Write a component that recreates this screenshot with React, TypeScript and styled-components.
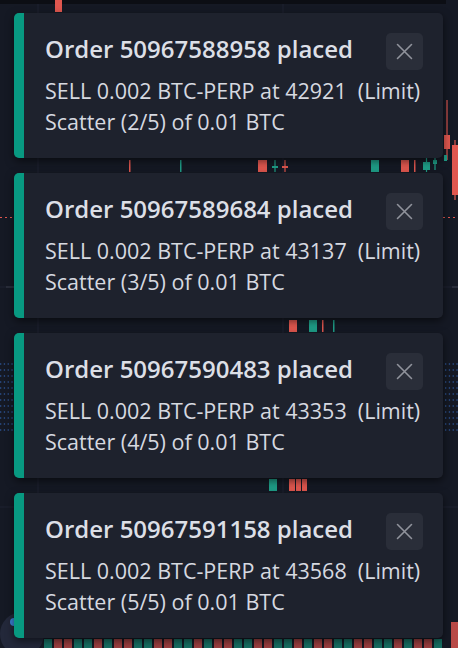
import React from "react";
import styled, { createGlobalStyle } from "styled-components";

const GlobalStyle = createGlobalStyle`
  html, body {
    margin: 0;
    padding: 0;
    background: #131722;
    overflow: hidden;
  }
  * { box-sizing: border-box; }
`;

const Screen = styled.div`
  position: relative;
  width: 458px;
  height: 648px;
  overflow: hidden;
  background: #151924;
  font-family: "Open Sans", "DejaVu Sans", sans-serif;
`;

const ChartLayer = styled.svg`
  position: absolute;
  inset: 0;
  display: block;
`;

const ToastStack = styled.div`
  position: absolute;
  top: 13px;
  left: 14px;
  width: 429px;
  display: flex;
  flex-direction: column;
  gap: 15px;
`;

const Toast = styled.div`
  display: flex;
  height: 145px;
  background: #1e222d;
  border-radius: 5px;
  overflow: hidden;
  box-shadow: 0 3px 8px rgba(0, 0, 0, 0.55);
`;

const Stripe = styled.div<{ $color: string }>`
  flex: 0 0 10px;
  background: ${(p) => p.$color};
`;

const Content = styled.div`
  flex: 1;
  display: flex;
  flex-direction: column;
  padding: 22px 20px 0 21px;
  color: #d8dbe2;
`;

const Header = styled.div`
  display: flex;
  justify-content: space-between;
  align-items: flex-start;
  height: 28px;
  margin-bottom: 12px;
`;

const Title = styled.div`
  font-size: 24px;
  line-height: 28px;
  font-weight: 600;
  white-space: nowrap;
  color: #dcdfe6;
`;

const CloseButton = styled.button`
  flex: 0 0 37px;
  width: 37px;
  height: 37px;
  margin-top: -2px;
  padding: 0;
  border: none;
  border-radius: 5px;
  background: #2a2e39;
  display: flex;
  align-items: center;
  justify-content: center;
  cursor: pointer;
`;

const Line = styled.div`
  font-size: 21.5px;
  line-height: 31px;
  white-space: pre;
  color: #d6d9e0;
`;

type Order = { id: string; price: string; step: number };

const orders: Order[] = [
  { id: "50967588958", price: "42921", step: 2 },
  { id: "50967589684", price: "43137", step: 3 },
  { id: "50967590483", price: "43353", step: 4 },
  { id: "50967591158", price: "43568", step: 5 },
];

const CloseIcon = () => (
  <svg width="17" height="17" viewBox="0 0 17 17">
    <path d="M1.5 1.5 L15.5 15.5 M15.5 1.5 L1.5 15.5" stroke="#90939c" strokeWidth="1.6" strokeLinecap="round" />
  </svg>
);

const RED = "#e0574f";
const GREEN = "#1f9e88";

type Candle = { x: number; y: number; w: number; h: number; c: string; wick?: [number, number] };

const candles: Candle[] = [
  { x: 55, y: 0, w: 7, h: 12, c: RED },
  { x: 129, y: 160, w: 1.5, h: 12, c: RED },
  { x: 180, y: 160, w: 1.5, h: 12, c: GREEN },
  { x: 258, y: 160, w: 9, h: 12, c: RED },
  { x: 272, y: 166, w: 6, h: 2, c: GREEN, wick: [160, 172] },
  { x: 282, y: 166, w: 6, h: 2, c: RED, wick: [160, 172] },
  { x: 371, y: 160, w: 8, h: 12, c: GREEN },
  { x: 401, y: 160, w: 8, h: 12, c: RED },
  { x: 414, y: 160, w: 1.5, h: 12, c: RED },
  { x: 423, y: 162, w: 7, h: 8, c: GREEN, wick: [158, 172] },
  { x: 433, y: 160, w: 4, h: 4, c: GREEN, wick: [158, 170] },
  { x: 289, y: 320, w: 8, h: 12, c: RED },
  { x: 309, y: 320, w: 8, h: 12, c: GREEN },
  { x: 322, y: 320, w: 1.5, h: 12, c: RED },
  { x: 333, y: 320, w: 1.5, h: 12, c: GREEN },
  { x: 269, y: 479, w: 8, h: 12, c: GREEN },
  { x: 289, y: 479, w: 6, h: 12, c: RED },
  { x: 296, y: 479, w: 5, h: 12, c: RED },
  { x: 302, y: 479, w: 5, h: 12, c: RED },
  { x: 444, y: 135, w: 6, h: 14, c: RED, wick: [100, 160] },
  { x: 452, y: 145, w: 6, h: 50, c: RED, wick: [140, 200] },
  { x: 444, y: 155, w: 3, h: 6, c: GREEN },
  { x: 451, y: 622, w: 7, h: 26, c: "#b84a47" },
];

const volume = Array.from({ length: 40 }, (_, i) => ({
  x: 44 + i * 10,
  c: [1, 0, 0, 1, 1, 0, 1, 0, 0, 1][i % 10] ? "#176f63" : "#9c3f40",
}));

const ChartBackground = () => (
  <ChartLayer width="458" height="648" viewBox="0 0 458 648">
    <rect width="458" height="648" fill="#151924" />
    <path d="M38 0 V648 M283 0 V648" stroke="#1e2230" strokeWidth="1" />
    <path d="M0 287 H458 M0 507 H458" stroke="#1e2230" strokeWidth="1" />
    <path d="M6 287 H14 M452 287 H458" stroke="#3a3e4a" strokeWidth="1" />
    <rect x="0" y="0" width="446" height="4" fill="#0c0e14" />
    <path d="M0 217.5 H14 M443 217.5 H458" stroke={RED} strokeWidth="1" strokeDasharray="2 3" />
    {Array.from({ length: 12 }, (_, r) => (
      <path
        key={r}
        d={`M0 ${364 + r * 6} H14 M445 ${364 + r * 6} H458`}
        stroke="#2b4f8a"
        strokeWidth="1.3"
        strokeDasharray="1.3 2.5"
      />
    ))}
    {candles.map((c, i) => (
      <g key={i}>
        {c.wick && (
          <line x1={c.x + c.w / 2} x2={c.x + c.w / 2} y1={c.wick[0]} y2={c.wick[1]} stroke={c.c} strokeWidth="1.2" />
        )}
        <rect x={c.x} y={c.y} width={c.w} height={c.h} fill={c.c} />
      </g>
    ))}
    {volume.map((v, i) => (
      <rect key={i} x={v.x} y={639} width={8} height={9} fill={v.c} />
    ))}
    <circle cx="22" cy="634" r="22" fill="#23283a" />
    <circle cx="14" cy="622" r="4" fill="#3b82d6" />
  </ChartLayer>
);

export default function App() {
  return (
    <>
      <GlobalStyle />
      <Screen>
        <ChartBackground />
        <ToastStack>
          {orders.map((o) => (
            <Toast key={o.id}>
              <Stripe $color="#089981" />
              <Content>
                <Header>
                  <Title>Order {o.id} placed</Title>
                  <CloseButton aria-label="Close">
                    <CloseIcon />
                  </CloseButton>
                </Header>
                <Line>{`SELL 0.002 BTC-PERP at ${o.price}  (Limit)`}</Line>
                <Line>{`Scatter (${o.step}/5) of 0.01 BTC`}</Line>
              </Content>
            </Toast>
          ))}
        </ToastStack>
      </Screen>
    </>
  );
}
